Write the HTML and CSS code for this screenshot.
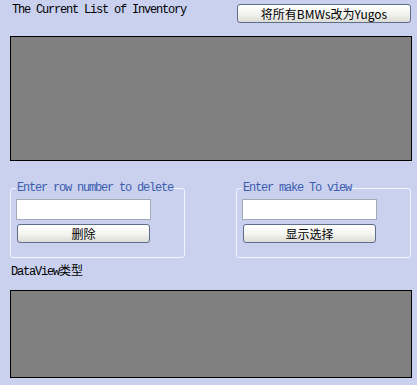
FILE: index.html
```html
<!DOCTYPE html>
<html lang="en">
<head>
    <meta charset="UTF-8">
    <meta name="viewport" content="width=device-width, initial-scale=1.0">
    <title>Inventory</title>
    <link rel="stylesheet" href="styles.css">
</head>
<body>
    <div class="window">
        <div class="header">
            <span class="title">The Current List of Inventory</span>
            <button class="btn btn-wide">将所有BMWs改为Yugos</button>
        </div>
        <div class="grid grid-top"></div>

        <div class="groups">
            <fieldset class="group">
                <legend>Enter row number to delete</legend>
                <input type="text" class="field">
                <button class="btn btn-small">删除</button>
            </fieldset>
            <fieldset class="group">
                <legend>Enter make To view</legend>
                <input type="text" class="field">
                <button class="btn btn-small">显示选择</button>
            </fieldset>
        </div>

        <div class="caption">DataView<span class="cjk">类型</span></div>
        <div class="grid grid-bottom"></div>
    </div>
</body>
</html>
```

FILE: styles.css
```css
:root {
    --bg: #c9d1ef;
    --grid: #808080;
    --legend: #3d5cae;
    --mono: "Liberation Mono", "Noto Sans CJK SC", monospace;
}
body {
    margin: 0;
    background-color: var(--bg);
    font-family: var(--mono);
    font-size: 12px;
    color: #000;
}
.window {
    width: 417px;
    height: 385px;
    padding: 4px 0 0 10px;
    box-sizing: border-box;
}
.header {
    display: flex;
    justify-content: space-between;
    align-items: flex-start;
    height: 19px;
    padding-right: 6px;
}
.title {
    margin-left: 2px;
    line-height: 12px;
    letter-spacing: -1.2px;
}
.btn {
    font-family: "Liberation Sans Narrow", "Noto Sans CJK SC", sans-serif;
    font-size: 12px;
    color: #000;
    background: linear-gradient(#ffffff, #f3f3ef 55%, #dcdcd6);
    border: 1px solid #5e6d8a;
    border-radius: 3px;
    padding: 0;
    line-height: 16px;
    cursor: pointer;
}
.btn-wide {
    width: 174px;
    height: 19px;
}
.btn-small {
    display: block;
    width: 133px;
    height: 19px;
    margin-left: 1px;
}
.grid {
    width: 402px;
    background-color: var(--grid);
    border: 1px solid #000;
    box-sizing: border-box;
}
.grid-top {
    margin-top: 13px;
    height: 125px;
}
.groups {
    display: flex;
    gap: 51px;
    margin-top: 21px;
}
.group {
    width: 175px;
    height: 76px;
    margin: 0;
    padding: 5px 0 0 5px;
    box-sizing: border-box;
    border: 1px solid #f2f5fd;
    border-radius: 3px;
}
.group legend {
    margin-left: 0;
    padding: 0 1px;
    color: var(--legend);
    line-height: 12px;
    letter-spacing: -1.2px;
}
.field {
    display: block;
    width: 135px;
    height: 21px;
    margin: 0 0 4px 0;
    padding: 0 3px;
    box-sizing: border-box;
    border: 1px solid #a2a9b8;
    background: #fff;
    font-family: var(--mono);
}
.caption {
    margin: 8px 0 0 1px;
    line-height: 13px;
    letter-spacing: -1.2px;
}
.cjk {
    letter-spacing: 0;
}
.grid-bottom {
    margin-top: 11px;
    height: 88px;
}
```
